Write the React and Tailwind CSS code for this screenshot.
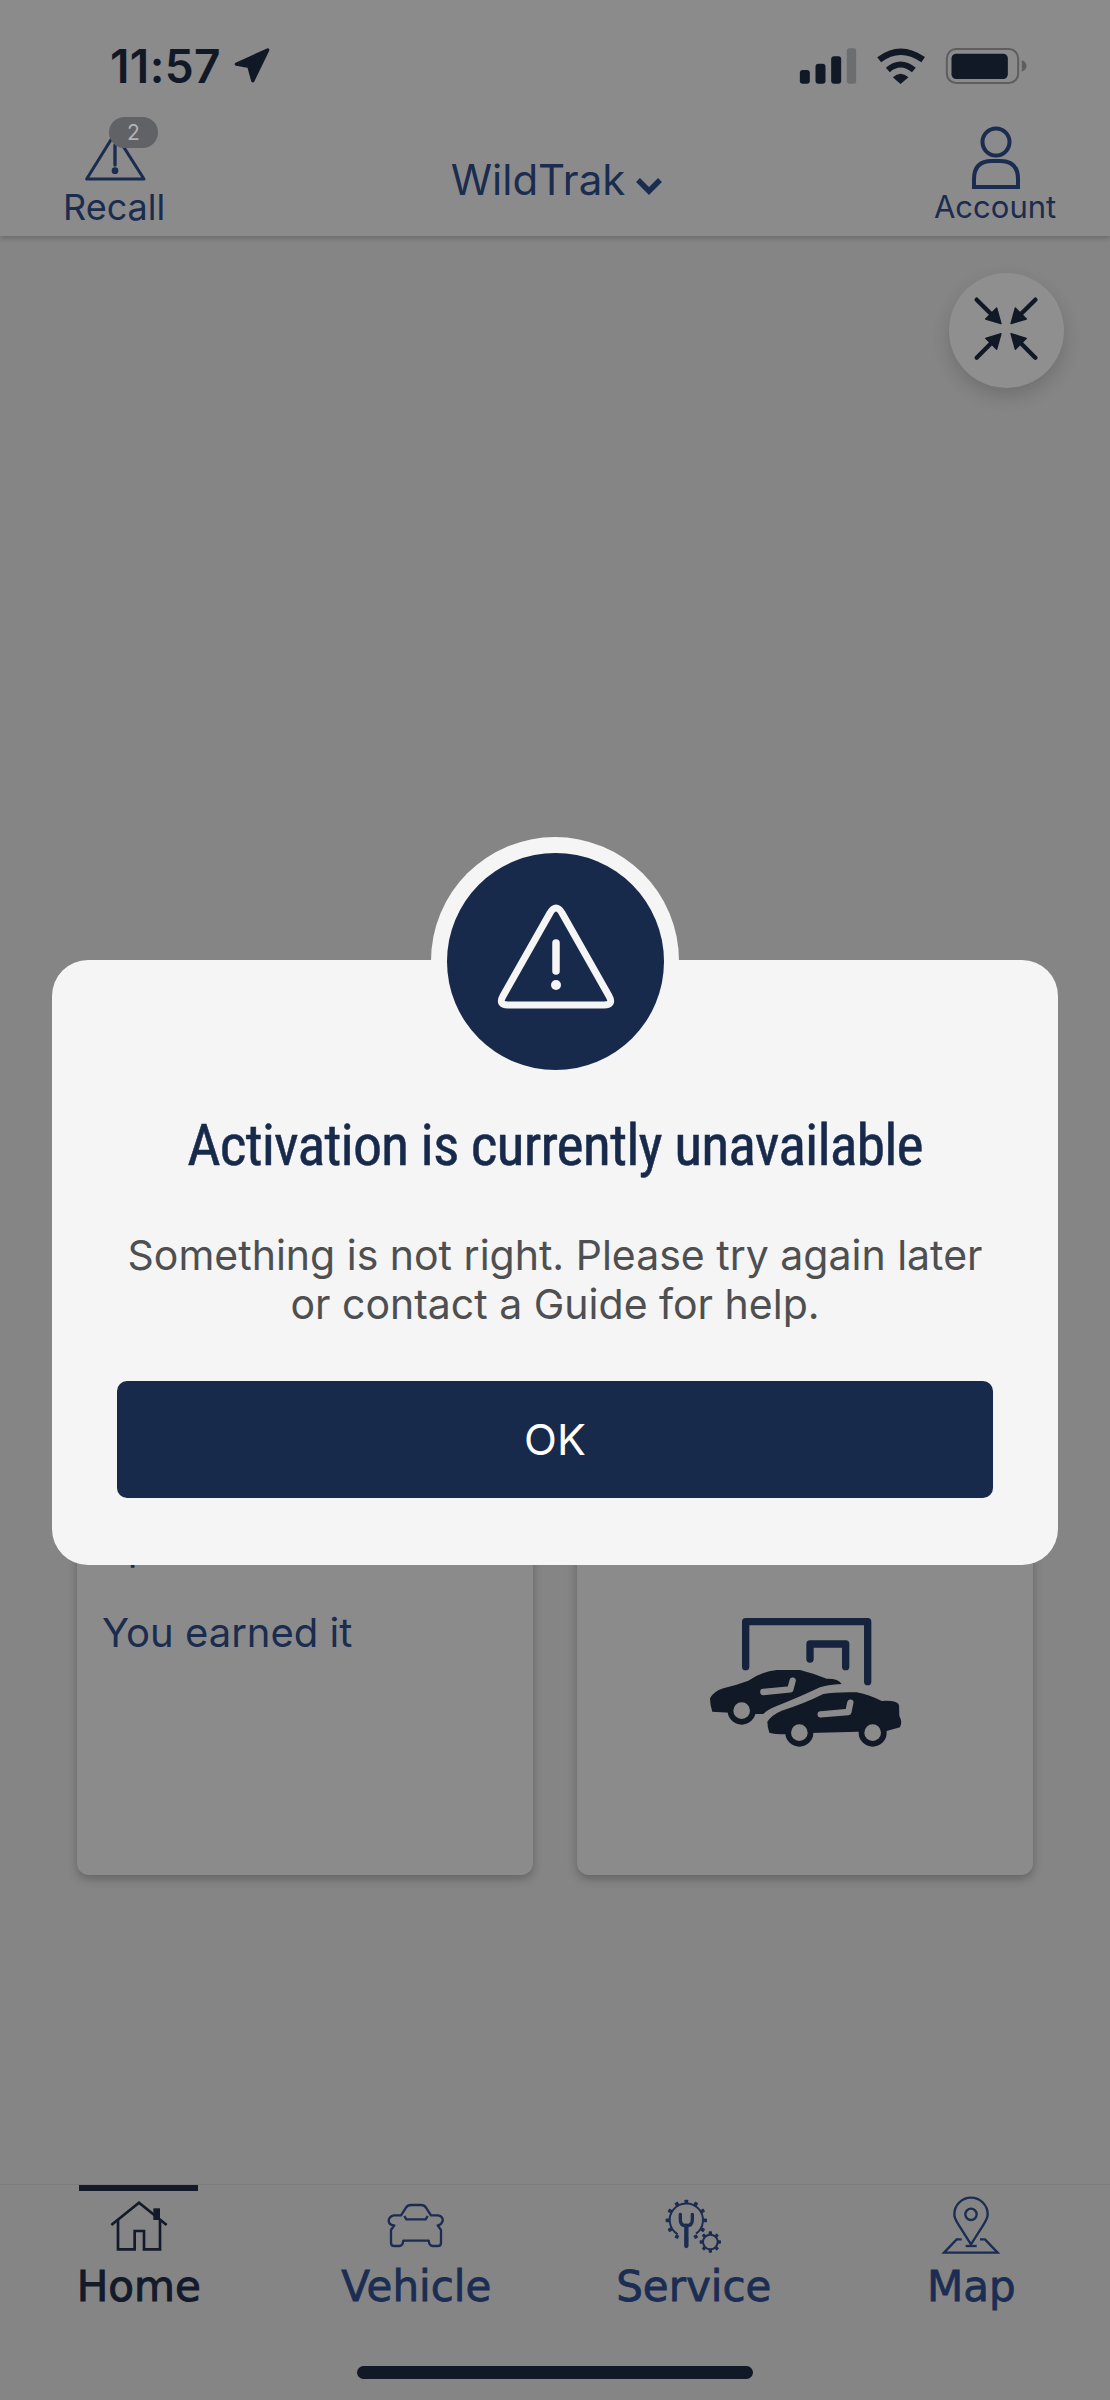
const teeth = (cx, cy, r, n, w, h) =>
  Array.from({ length: n }, (_, i) => (
    <rect key={i} x={cx - w / 2} y={cy - r - h} width={w} height={h + 3} rx="2" fill="currentColor" stroke="none" transform={`rotate(${(360 / n) * i} ${cx} ${cy})`} />
  ));

function StatusBar() {
  return (
    <div className="h-[100px] pt-[32px] pl-[110px] pr-[81px] flex items-center justify-between text-[#111826]">
      <div className="flex items-center">
        <span className="text-[46px] leading-[50px] font-semibold tracking-[0.4px] [font-family:Inter,sans-serif]">11:57</span>
        <svg viewBox="430 50 115 115" className="w-[38px] h-[38px] ml-[12px] -mt-[3px]">
          <path d="M440 105 L535 62 L490 155 L478 112 Z" fill="currentColor" stroke="currentColor" strokeWidth="10" strokeLinejoin="round" />
        </svg>
      </div>
      <svg viewBox="50 45 695 120" className="w-[232px] h-[40px]">
        <rect x="58" y="117" width="30" height="41" rx="9" fill="#111826" />
        <rect x="105" y="98" width="30" height="60" rx="9" fill="#111826" />
        <rect x="152" y="76" width="30" height="82" rx="9" fill="#111826" />
        <rect x="199" y="52" width="28" height="106" rx="8" fill="#6c6d6e" />
        <path d="M296 86 Q360 38 428 86" fill="none" stroke="#111826" strokeWidth="19" />
        <path d="M322 117 Q360 84 400 117" fill="none" stroke="#111826" strokeWidth="18" />
        <path d="M337 139 Q360 118 384 139 L360 159 Z" fill="#111826" />
        <rect x="499" y="54" width="214" height="102" rx="28" fill="none" stroke="#5d5e60" strokeWidth="6" />
        <rect x="513" y="68" width="169" height="76" rx="14" fill="#111826" />
        <path d="M724 88 Q738 94 738 105 Q738 116 724 122 Z" fill="#5d5e60" />
      </svg>
    </div>
  );
}

function Header() {
  return (
    <header className="h-[236px] shrink-0 bg-[#8b8b8b] shadow-[0_2px_5px_rgba(0,0,0,0.22)]">
      <StatusBar />
      <div className="grid grid-cols-3 px-[53px] h-[136px] text-[#1a2c4f] [font-family:Inter,sans-serif]">
        <div className="justify-self-start ml-[10px] w-[102px] flex flex-col relative">
          <svg viewBox="75 0 294 261" className="w-[98px] h-[87px] ml-[2px]">
            <path d="M225 100 L140 237 H312 Z" fill="none" stroke="currentColor" strokeWidth="9" strokeLinejoin="round" />
            <path d="M225 135 V195" stroke="currentColor" strokeWidth="10" strokeLinecap="round" />
            <circle cx="225" cy="212" r="10" fill="currentColor" />
          </svg>
          <div className="absolute left-[46px] top-[17px] w-[49px] h-[31px] rounded-full bg-[#606266] text-[#b2b2b2] text-[21px] leading-[31px] text-center">2</div>
          <span className="text-[36px] leading-[41px] whitespace-nowrap">Recall</span>
        </div>
        <div className="justify-self-center ml-[4px] mt-[55px] flex items-start">
          <span className="text-[42px] leading-[50px]">WildTrak</span>
          <svg viewBox="0 0 28 18" className="w-[28px] h-[18px] ml-[10px] mt-[22px]">
            <path d="M3 3 L14 14 L25 3" fill="none" stroke="#1a2c4f" strokeWidth="5.5" />
          </svg>
        </div>
        <div className="justify-self-end w-[123px] flex flex-col">
          <svg viewBox="0 0 123 89" className="w-[123px] h-[89px]">
            <circle cx="62" cy="42" r="13.5" fill="none" stroke="currentColor" strokeWidth="4" />
            <path d="M40 87 V79 Q40 61 58 61 H66 Q84 61 84 79 V87 Z" fill="none" stroke="currentColor" strokeWidth="4" />
          </svg>
          <span className="text-[31px] leading-[36px] whitespace-nowrap">Account</span>
        </div>
      </div>
    </header>
  );
}

function CollapseButton() {
  const arrow = (
    <g>
      <path d="M140 150 L190 200" stroke="#111826" strokeWidth="13" strokeLinecap="round" />
      <path d="M213 222 L167 208 L200 175 Z" fill="#111826" stroke="#111826" strokeWidth="4" strokeLinejoin="round" />
    </g>
  );
  return (
    <div className="self-end mt-[37px] mr-[46px] w-[115px] h-[115px] rounded-full bg-[#8f8f8f] shadow-[0_8px_18px_rgba(0,0,0,0.16)]">
      <svg viewBox="57 70 345 345" className="w-full h-full">
        {arrow}
        <g transform="matrix(-1 0 0 1 456 0)">{arrow}</g>
        <g transform="matrix(1 0 0 -1 0 474)">{arrow}</g>
        <g transform="matrix(-1 0 0 -1 456 474)">{arrow}</g>
      </svg>
    </div>
  );
}

function GarageIcon() {
  return (
    <svg viewBox="0 0 720 540" className="w-[240px] h-[180px] mr-[10px]">
      <path d="M197 230 V95 H563 V275" fill="none" stroke="#16233c" strokeWidth="22" strokeLinecap="round" strokeLinejoin="round" />
      <path d="M390 207 V162 H497 V230" fill="none" stroke="#16233c" strokeWidth="22" strokeLinecap="round" strokeLinejoin="round" />
      <path d="M90 325 Q100 305 130 295 Q170 285 205 272 Q245 245 290 240 L360 240 Q400 250 440 266 Q475 265 485 282 Q440 285 420 292 Q350 325 290 348 Q260 360 250 372 L215 372 L150 368 L97 365 Q90 345 90 325 Z" fill="#111826" />
      <circle cx="185" cy="362" r="42" fill="#111826" />
      <circle cx="185" cy="362" r="25" fill="#8b8b8b" />
      <path d="M250 306 L331 298 L338 272" fill="none" stroke="#8b8b8b" strokeWidth="19" strokeLinecap="round" strokeLinejoin="round" />
      <path d="M262 395 Q275 375 305 362 Q370 342 430 312 Q470 305 530 307 Q570 315 605 333 Q650 330 657 345 L658 378 Q668 395 660 412 L620 423 L360 430 Q300 437 268 428 Q262 410 262 395 Z" fill="#111826" />
      <circle cx="358" cy="428" r="42" fill="#111826" />
      <circle cx="358" cy="428" r="25" fill="#8b8b8b" />
      <circle cx="578" cy="428" r="42" fill="#111826" />
      <circle cx="578" cy="428" r="25" fill="#8b8b8b" />
      <path d="M422 373 L505 366 L511 338" fill="none" stroke="#8b8b8b" strokeWidth="19" strokeLinecap="round" strokeLinejoin="round" />
    </svg>
  );
}

function Cards() {
  return (
    <div className="mt-auto mb-[309px] px-[77px] grid grid-cols-2 gap-[44px] [font-family:Inter,sans-serif]">
      <div className="h-[416px] rounded-[12px] bg-[#8b8b8b] shadow-[0_4px_10px_rgba(0,0,0,0.25)] pt-[63px] pl-[25px] text-[#1a2c4f] text-[40px] leading-[48px]">
        <p>Spend</p>
        <p className="mt-[39px]">You earned it</p>
      </div>
      <div className="h-[416px] rounded-[12px] bg-[#8b8b8b] shadow-[0_4px_10px_rgba(0,0,0,0.25)] pt-[131px] flex justify-center items-start">
        <GarageIcon />
      </div>
    </div>
  );
}

function TabItem({ label, active, children }) {
  return (
    <div className={`flex flex-col items-center ${active ? "text-[#131a2a]" : "text-[#1b2d52]"}`}>
      <div className={`w-[119px] h-[6px] ${active ? "bg-[#131a2a]" : "bg-transparent"}`} />
      {children}
      <span className={`text-[42px] leading-[54px] [font-family:'DejaVu_Sans',sans-serif] ${active ? "[-webkit-text-stroke:1px_currentColor]" : "[-webkit-text-stroke:0.8px_currentColor]"}`}>{label}</span>
    </div>
  );
}

function BottomNav() {
  const svg = "w-[90px] h-[66px] mt-[3px]";
  return (
    <nav className="h-[216px] shrink-0 bg-[#858585] border-t border-[#7b7b7b] flex flex-col">
      <div className="grid grid-cols-4">
        <TabItem label="Home" active>
          <svg viewBox="100 54 270 198" className={svg} fill="none" stroke="currentColor" strokeWidth="8">
            <path d="M152 147 L235 80 L318 147" />
            <path d="M172 130 V220 H222 V165 H250 V220 H298 V130" />
            <rect x="278" y="97" width="20" height="35" fill="currentColor" stroke="none" />
          </svg>
        </TabItem>
        <TabItem label="Vehicle">
          <svg viewBox="930 54 270 198" className={svg} fill="none" stroke="currentColor" strokeWidth="7" strokeLinejoin="round">
            <path d="M1020 118 L1035 95 Q1040 87 1050 87 H1080 Q1090 87 1095 95 L1110 118 H1132 Q1147 122 1145 135 Q1140 148 1130 148 L1140 162 V200 Q1140 210 1130 210 H1115 Q1105 210 1103 194 H1027 Q1025 210 1015 210 H1000 Q990 210 990 200 V162 L1000 148 Q985 148 983 135 Q983 122 998 118 Z" />
            <path d="M1030 120 L1036 130 H1094 L1100 120" />
          </svg>
        </TabItem>
        <TabItem label="Service">
          <svg viewBox="146 39 270 198" className={svg} fill="none" stroke="currentColor" strokeWidth="6">
            {teeth(258, 118, 54, 12, 11, 8)}
            {teeth(330, 183, 25, 8, 10, 7)}
            <path d="M232 160 A50 50 0 1 1 287 158" />
            <circle cx="330" cy="183" r="22" />
            <path d="M240 100 V116 Q240 134 258 134 Q276 134 276 116 V100" strokeWidth="10" strokeLinecap="round" />
            <path d="M258 134 V195" strokeWidth="13" strokeLinecap="round" />
          </svg>
        </TabItem>
        <TabItem label="Map">
          <svg viewBox="978 39 270 198" className={svg} fill="none" stroke="currentColor" strokeWidth="7">
            <path d="M1113 190 L1075 130 Q1063 112 1063 100 A50 50 0 1 1 1163 100 Q1163 112 1151 130 Z" />
            <circle cx="1113" cy="100" r="17" />
            <path d="M1085 175 H1070 L1032 215 H1193 L1155 175 H1140" />
            <path d="M1097 195 H1130" />
          </svg>
        </TabItem>
      </div>
      <div className="mt-auto mb-[21px] self-center w-[396px] h-[13px] rounded-full bg-[#111826]" />
    </nav>
  );
}

function Modal() {
  return (
    <div className="absolute left-[52px] top-[960px] w-[1006px] h-[605px] rounded-[36px] bg-[#f5f5f5] flex flex-col items-center">
      <div className="absolute left-1/2 -translate-x-1/2 -top-[123px] w-[248px] h-[248px] rounded-full bg-[#f5f5f5] flex items-center justify-center">
        <div className="w-[217px] h-[217px] rounded-full bg-[#182a4b]">
          <svg viewBox="0 0 217 217" className="w-full h-full" fill="none" stroke="#f5f5f5">
            <path d="M103 60 Q109 50 115 60 L162 143 Q167 152 157 152 H61 Q51 152 56 143 Z" strokeWidth="7" strokeLinejoin="round" />
            <path d="M109 90 V118" strokeWidth="7.5" strokeLinecap="round" />
            <circle cx="109" cy="132" r="5" fill="#f5f5f5" stroke="none" />
          </svg>
        </div>
      </div>
      <h1 className="mt-[155px] text-[58px] leading-[60px] font-normal tracking-[-0.95px] text-[#182a4b] whitespace-nowrap [-webkit-text-stroke:0.5px_#182a4b] [font-family:'Liberation_Sans_Narrow','Roboto_Condensed',Roboto,sans-serif]">
        Activation is currently unavailable
      </h1>
      <p className="mt-[56px] w-[880px] text-center text-[#4e4f51] text-[41px] leading-[49px] [font-family:Inter,sans-serif]">
        Something is not right. Please try again later
        <br />
        or contact a Guide for help.
      </p>
      <button className="mt-[52px] w-[876px] h-[117px] rounded-[10px] bg-[#182a4b] text-white text-[43px] [font-family:Inter,sans-serif]">
        OK
      </button>
    </div>
  );
}

export default function App() {
  return (
    <div className="relative w-[1110px] h-[2400px] overflow-hidden bg-[#858585] flex flex-col">
      <Header />
      <main className="flex-1 flex flex-col">
        <CollapseButton />
        <Cards />
      </main>
      <BottomNav />
      <Modal />
    </div>
  );
}
